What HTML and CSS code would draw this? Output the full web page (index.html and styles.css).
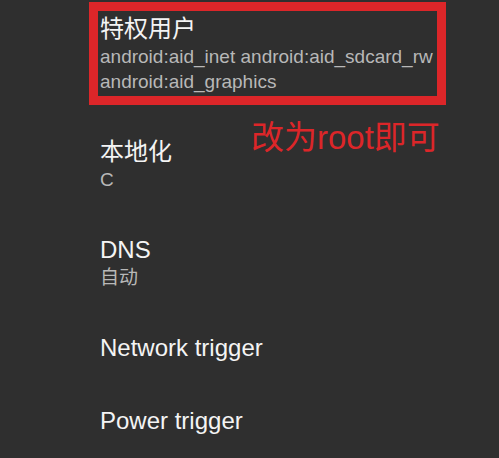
FILE: index.html
```html
<!DOCTYPE html>
<html lang="zh">
<head>
<meta charset="utf-8">
<title>设置</title>
<link rel="stylesheet" href="styles.css">
</head>
<body>
<div class="screen">
  <ul class="list">
    <li class="item">
      <div class="title">特权用户</div>
      <div class="sub">android:aid_inet android:aid_sdcard_rw android:aid_graphics</div>
    </li>
    <li class="item">
      <div class="title">本地化</div>
      <div class="sub">C</div>
    </li>
    <li class="item">
      <div class="title">DNS</div>
      <div class="sub">自动</div>
    </li>
    <li class="item">
      <div class="title">Network trigger</div>
    </li>
    <li class="item">
      <div class="title">Power trigger</div>
    </li>
  </ul>
  <div class="highlight"></div>
  <div class="note">改为root即可</div>
</div>
</body>
</html>
```

FILE: styles.css
```css
html, body {
  margin: 0;
  padding: 0;
  background: #2f2f2f;
}

.screen {
  position: relative;
  width: 499px;
  height: 458px;
  overflow: hidden;
  background: #2f2f2f;
  font-family: "Liberation Sans", "Noto Sans CJK SC", sans-serif;
}

.list {
  list-style: none;
  margin: 0;
  padding: 14px 60px 0 100px;
  display: flex;
  flex-direction: column;
  gap: 43px;
}

.item {
  display: flex;
  flex-direction: column;
}

.title {
  font-size: 24px;
  line-height: 30px;
  color: #f4f4f4;
}

.sub {
  font-size: 19px;
  line-height: 25px;
  color: #b8b8b8;
  width: 340px;
}

.highlight {
  position: absolute;
  left: 89px;
  top: 2px;
  width: 357px;
  height: 103px;
  box-sizing: border-box;
  border: 9px solid #dc2629;
}

.note {
  position: absolute;
  left: 251px;
  top: 118px;
  font-size: 33px;
  line-height: 40px;
  color: #dc2629;
  font-family: "Liberation Sans", "Noto Sans CJK SC", sans-serif;
}
```
